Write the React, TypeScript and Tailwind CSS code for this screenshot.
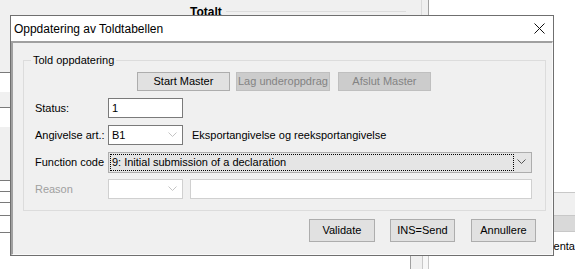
import React from "react";

const Chevron = ({ color }: { color: string }) => (
  <svg width="9" height="6" viewBox="0 0 9 6">
    <polyline points="0.5,0.5 4.5,4.5 8.5,0.5" fill="none" stroke={color} strokeWidth="1" />
  </svg>
);

const Btn = ({
  label,
  w,
  h,
  disabled,
  className = "",
}: {
  label: string;
  w: string;
  h: string;
  disabled?: boolean;
  className?: string;
}) => (
  <div
    className={`${w} ${h} ${className} flex items-center justify-center border ${
      disabled ? "bg-[#cccccc] border-[#bfbfbf] text-[#838383]" : "bg-[#e1e1e1] border-[#adadad] text-black"
    }`}
  >
    {label}
  </div>
);

export default function App() {
  return (
    <div
      className="w-[575px] h-[269px] overflow-hidden flex flex-col bg-white text-[11px] leading-[13px] text-black"
      style={{ fontFamily: '"Liberation Sans", Arial, sans-serif' }}
    >
      {/* top strip of background app */}
      <div className="h-[15px] flex shrink-0">
        <div className="w-[421px] bg-[#f0f0f0] flex items-start overflow-hidden">
          <div className="ml-[190px] mt-[5px] flex items-start">
            <span className="font-bold text-[12px] leading-[14px]">Totalt</span>
            <div className="w-[180px] h-px bg-[#dcdcdc] mt-[6px] ml-[4px]" />
          </div>
        </div>
        <div className="w-[8px] bg-[#f0f0f0] border-l border-l-[#dadada] border-r border-r-[#a0a0a0]" />
        <div className="flex-1 bg-white" />
      </div>

      {/* middle */}
      <div className="h-[241px] flex shrink-0">
        {/* left strip */}
        <div className="w-[10px] bg-[#f0f0f0] flex flex-col">
          <div className="h-[57px]" />
          <div className="h-[20px] bg-white border-t border-[#7a7a7a]" />
          <div className="h-[15px]" />
          <div className="h-[20px] bg-white border-t border-[#7a7a7a]" />
          <div className="h-[53px]" />
          <div className="h-[11px] bg-white border-t border-[#7a7a7a]" />
          <div className="h-[11px] bg-white border-t border-[#7a7a7a]" />
          <div className="h-[13px] bg-white border-t border-[#7a7a7a]" />
          <div className="h-[17px] bg-white border-t border-[#7a7a7a]" />
          <div className="flex-1 bg-white border-t border-[#7a7a7a]" />
        </div>

        {/* dialog */}
        <div className="w-[547px] h-[241px] border border-[#6f6f6f] bg-white flex flex-col">
          <div className="h-[25px] flex items-center justify-between bg-white shrink-0">
            <span className="ml-[3px] text-[12px] leading-[14px]">Oppdatering av Toldtabellen</span>
            <svg width="11" height="11" viewBox="0 0 11 11" className="mr-[8px]">
              <line x1="0.5" y1="0.5" x2="10.5" y2="10.5" stroke="#111" strokeWidth="1" />
              <line x1="10.5" y1="0.5" x2="0.5" y2="10.5" stroke="#111" strokeWidth="1" />
            </svg>
          </div>
          <div className="flex-1 bg-[#f0f0f0] border-t-2 border-l-2 border-t-[#a0a0a0] border-l-[#a0a0a0] border-r border-b border-r-[#fafafa] border-b-[#fafafa] flex flex-col">
            {/* group box */}
            <div className="relative ml-[10px] mt-[17px] w-[523px] h-[151px] border border-[#dcdcdc] flex flex-col">
              <span className="absolute left-[7px] -top-[7px] px-[2px] bg-[#f0f0f0]">Told oppdatering</span>
              <div className="mt-[11px] flex">
                <Btn label="Start Master" w="w-[93px]" h="h-[19px]" className="ml-[113px]" />
                <Btn label="Lag underoppdrag" w="w-[94px]" h="h-[19px]" className="ml-[6px]" disabled />
                <Btn label="Afslut Master" w="w-[93px]" h="h-[19px]" className="ml-[8px]" disabled />
              </div>
              <div className="mt-[7px] ml-[11px] flex flex-col gap-[7px]">
                <div className="h-[20px] flex items-center">
                  <span className="w-[73px]">Status:</span>
                  <div className="w-[75px] h-[20px] bg-white border border-[#7a7a7a] flex items-center pl-[3px]">1</div>
                </div>
                <div className="h-[20px] flex items-center">
                  <span className="w-[73px]">Angivelse art.:</span>
                  <div className="w-[75px] h-[20px] bg-white border border-[#7a7a7a] flex items-center justify-between pl-[3px] pr-[5px]">
                    <span>B1</span>
                    <Chevron color="#c4c4c4" />
                  </div>
                  <span className="ml-[9px]">Eksportangivelse og reeksportangivelse</span>
                </div>
                <div className="h-[20px] flex items-center">
                  <span className="w-[73px]">Function code</span>
                  <div className="w-[424px] h-[21px] bg-[#e5e5e5] border border-[#adadad] flex items-center pl-px pr-[5px]">
                    <div className="w-[404px] h-[17px] border border-dotted border-black flex items-center pl-[1px]">
                      9: Initial submission of a declaration
                    </div>
                    <div className="flex-1 flex justify-end">
                      <Chevron color="#555555" />
                    </div>
                  </div>
                </div>
                <div className="h-[20px] flex items-center">
                  <span className="w-[73px] text-[#a0a0a0]">Reason</span>
                  <div className="w-[75px] h-[20px] bg-white border border-[#d0d0d0] flex items-center justify-end pr-[5px]">
                    <Chevron color="#c4c4c4" />
                  </div>
                  <div className="ml-[7px] w-[342px] h-[20px] bg-white border border-[#d0d0d0]" />
                </div>
              </div>
            </div>
            {/* bottom buttons */}
            <div className="mt-[8px] flex">
              <Btn label="Validate" w="w-[66px]" h="h-[23px]" className="ml-[296px]" />
              <Btn label="INS=Send" w="w-[65px]" h="h-[23px]" className="ml-[15px]" />
              <Btn label="Annullere" w="w-[65px]" h="h-[23px]" className="ml-[16px]" />
            </div>
          </div>
        </div>

        {/* right strip */}
        <div className="flex-1 flex flex-col">
          <div className="h-[177px] bg-white" />
          <div className="h-[23px] bg-[#f0f0f0] border-t border-[#c8c8c8]" />
          <div className="h-[17px] bg-[#d9d9d9] border-t border-b border-[#c8c8c8]" />
          <div className="flex-1 bg-white flex items-end pb-[3px]">
            <span className="leading-[13px]">enta</span>
          </div>
        </div>
      </div>

      {/* bottom strip */}
      <div className="flex-1 flex">
        <div className="w-[410px] bg-white" />
        <div className="w-[12px] bg-[#f0f0f0] border-l border-[#a0a0a0]" />
        <div className="w-[7px] bg-[#f7f7f7] border-l border-r border-[#c8c8c8]" />
        <div className="flex-1 bg-white" />
      </div>
    </div>
  );
}
